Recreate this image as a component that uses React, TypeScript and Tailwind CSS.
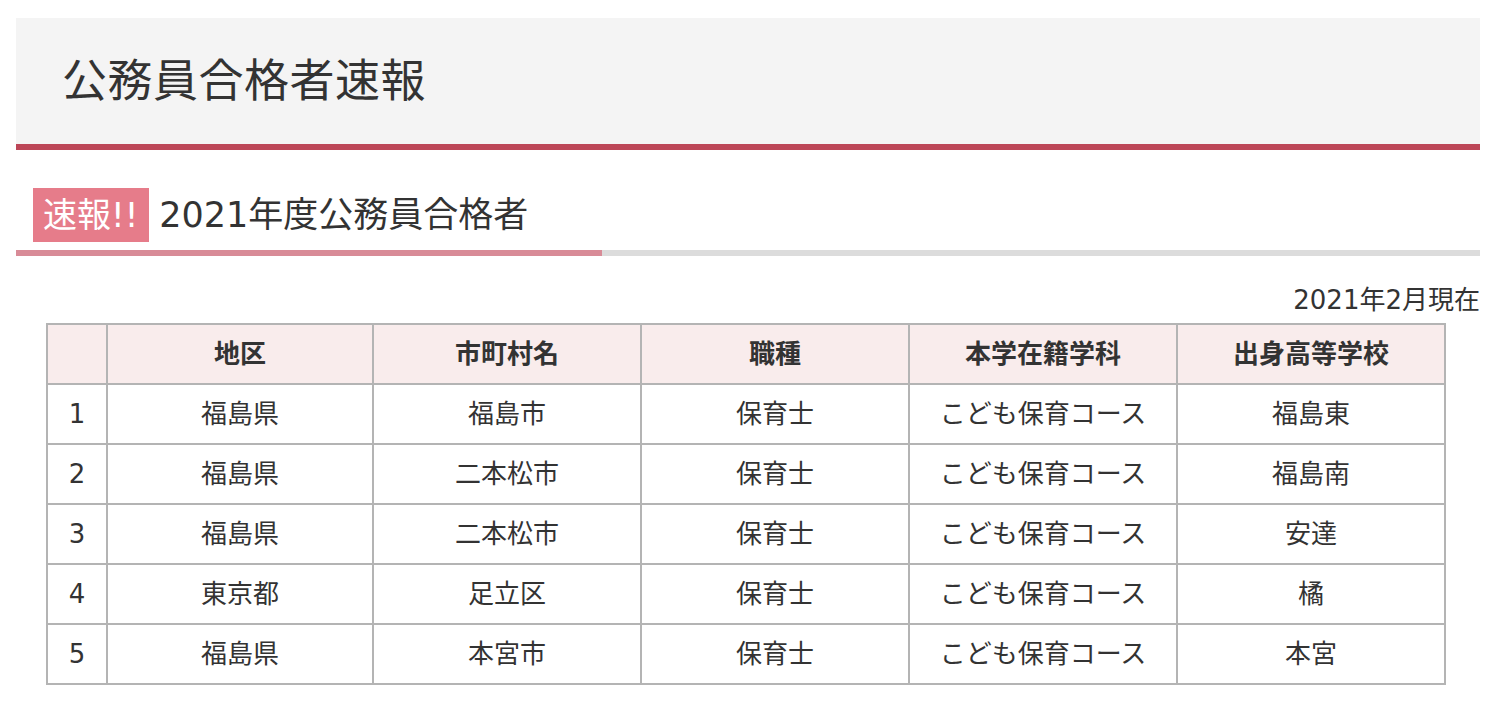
import React from "react";

const rows = [
  { no: 1, area: "福島県", city: "福島市", job: "保育士", dept: "こども保育コース", school: "福島東" },
  { no: 2, area: "福島県", city: "二本松市", job: "保育士", dept: "こども保育コース", school: "福島南" },
  { no: 3, area: "福島県", city: "二本松市", job: "保育士", dept: "こども保育コース", school: "安達" },
  { no: 4, area: "東京都", city: "足立区", job: "保育士", dept: "こども保育コース", school: "橘" },
  { no: 5, area: "福島県", city: "本宮市", job: "保育士", dept: "こども保育コース", school: "本宮" },
];

const heads = ["地区", "市町村名", "職種", "本学在籍学科", "出身高等学校"];

export default function App() {
  return (
    <main
      className="min-h-screen w-full bg-white text-[#333] pt-[18px] pl-4 pr-[14px]"
      style={{ fontFamily: '"DejaVu Sans", "Noto Sans CJK JP", sans-serif' }}
    >
      {/* Page title */}
      <div className="bg-[#f4f4f4] border-b-[6px] border-[#bc4657] h-[132px] flex items-center pl-[46px]">
        <h1 className="text-[45px] leading-none tracking-[0.5px]">公務員合格者速報</h1>
      </div>

      {/* Section heading */}
      <div className="mt-[38px]">
        <div className="flex items-center gap-[10px] pl-[17px]">
          <span className="bg-[#e67c8a] text-white text-[34px] leading-none h-[54px] pl-[10px] pr-[11px] flex items-center">
            速報!!
          </span>
          <h2 className="text-[35px] leading-none">2021年度公務員合格者</h2>
        </div>
        <div className="flex mt-2 h-[6px]">
          <div className="w-[586px] bg-[#d88b97]" />
          <div className="flex-1 bg-[#dcdcdc]" />
        </div>
      </div>

      <p className="text-right text-[26px] leading-none mt-[31px]">2021年2月現在</p>

      <table className="ml-[30px] mt-[10px] border-collapse text-[26px] text-center">
        <thead>
          <tr className="bg-[#f9ecec] h-[60px]">
            <th className="border-2 border-[#b4b4b4] w-[60px]" />
            {heads.map((h, i) => (
              <th
                key={h}
                className={`border-2 border-[#b4b4b4] font-bold ${i === 0 ? "w-[266px]" : "w-[268px]"}`}
              >
                {h}
              </th>
            ))}
          </tr>
        </thead>
        <tbody>
          {rows.map((r) => (
            <tr key={r.no} className="h-[60px]">
              <td className="border-2 border-[#b4b4b4]">{r.no}</td>
              <td className="border-2 border-[#b4b4b4]">{r.area}</td>
              <td className="border-2 border-[#b4b4b4]">{r.city}</td>
              <td className="border-2 border-[#b4b4b4]">{r.job}</td>
              <td className="border-2 border-[#b4b4b4]">{r.dept}</td>
              <td className="border-2 border-[#b4b4b4]">{r.school}</td>
            </tr>
          ))}
        </tbody>
      </table>
    </main>
  );
}
